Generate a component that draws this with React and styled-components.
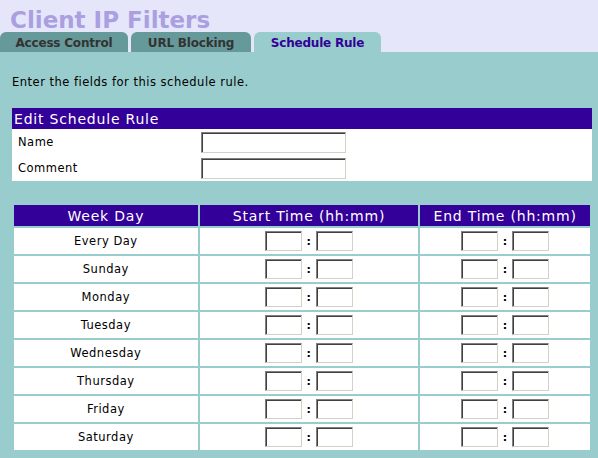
import React from 'react';
import styled, { createGlobalStyle } from 'styled-components';

const GlobalStyle = createGlobalStyle`
  html, body {
    margin: 0;
    padding: 0;
    background: #99cccc;
    font-family: "DejaVu Sans", Verdana, sans-serif;
  }
`;

const Header = styled.div`
  background: #e6e6fb;
  padding: 8px 0 0 0;
`;

const Title = styled.h1`
  margin: 0 0 0 10px;
  font-size: 23px;
  line-height: 24px;
  font-weight: bold;
  color: #aa9fe0;
`;

const Tabs = styled.div`
  display: flex;
  gap: 3px;
`;

const Tab = styled.div`
  width: ${(p) => p.$w}px;
  height: 20px;
  box-sizing: border-box;
  border-radius: 6px 6px 0 0;
  background: ${(p) => (p.$active ? '#99cccc' : '#669999')};
  color: ${(p) => (p.$active ? '#330099' : '#333333')};
  font-size: 12px;
  letter-spacing: -0.2px;
  font-weight: bold;
  line-height: 22px;
  text-align: center;
  overflow: hidden;
`;

const Content = styled.div`
  padding: 23px 6px 8px 12px;
`;

const Intro = styled.p`
  margin: 0 0 19px 0;
  font-size: 11.5px;
  letter-spacing: 0.5px;
  line-height: 14px;
  color: #000;
`;

const EditBox = styled.table`
  width: 580px;
  border-collapse: collapse;
  background: #fff;
  margin-bottom: 22px;
`;

const BoxHead = styled.th`
  background: #330099;
  color: #fff;
  font-size: 14px;
  letter-spacing: 0.8px;
  font-weight: normal;
  text-align: left;
  height: 21px;
  padding: 0 2px;
`;

const Label = styled.td`
  width: 182px;
  padding: 0 0 0 6px;
  height: 26px;
  font-size: 11.5px;
  letter-spacing: 0.5px;
`;

const Field = styled.input`
  box-sizing: border-box;
  width: ${(p) => p.$w || 145}px;
  height: ${(p) => p.$h || 21}px;
  margin: 0;
  padding: 0 2px;
  background: #fff;
  border: 1px solid;
  border-color: #808080 #d4d0c8 #d4d0c8 #808080;
  box-shadow: inset 1px 1px 0 #404040;
  outline: none;
  vertical-align: middle;
`;

const Schedule = styled.table`
  width: 580px;
  border-spacing: 2px;
`;

const HeadCell = styled.th`
  background: #330099;
  color: #fff;
  font-size: 14px;
  letter-spacing: 0.8px;
  font-weight: normal;
  height: 21px;
  padding: 0;
  width: ${(p) => p.$w}px;
`;

const Cell = styled.td`
  background: #fff;
  height: 26px;
  padding: 0;
  text-align: center;
  font-size: 11.5px;
  letter-spacing: 0.5px;
`;

const TimePair = styled.div`
  display: flex;
  justify-content: center;
  align-items: center;
`;

const Colon = styled.span`
  width: 14px;
  text-align: center;
  font-size: 11px;
  font-weight: bold;
`;

const days = ['Every Day', 'Sunday', 'Monday', 'Tuesday', 'Wednesday', 'Thursday', 'Friday', 'Saturday'];

const Time = () => (
  <TimePair>
    <Field $w={37} $h={20} />
    <Colon>:</Colon>
    <Field $w={37} $h={20} />
  </TimePair>
);

export default function App() {
  return (
    <>
      <GlobalStyle />
      <Header>
        <Title>Client IP Filters</Title>
        <Tabs>
          <Tab $w={128}>Access Control</Tab>
          <Tab $w={120}>URL Blocking</Tab>
          <Tab $w={127} $active>Schedule Rule</Tab>
        </Tabs>
      </Header>
      <Content>
        <Intro>Enter the fields for this schedule rule.</Intro>
        <EditBox>
          <thead>
            <tr>
              <BoxHead colSpan={2}>Edit Schedule Rule</BoxHead>
            </tr>
          </thead>
          <tbody>
            <tr>
              <Label>Name</Label>
              <td><Field /></td>
            </tr>
            <tr>
              <Label>Comment</Label>
              <td><Field /></td>
            </tr>
          </tbody>
        </EditBox>
        <Schedule>
          <thead>
            <tr>
              <HeadCell $w={184}>Week Day</HeadCell>
              <HeadCell $w={219}>Start Time (hh:mm)</HeadCell>
              <HeadCell $w={170}>End Time (hh:mm)</HeadCell>
            </tr>
          </thead>
          <tbody>
            {days.map((d) => (
              <tr key={d}>
                <Cell>{d}</Cell>
                <Cell><Time /></Cell>
                <Cell><Time /></Cell>
              </tr>
            ))}
          </tbody>
        </Schedule>
      </Content>
    </>
  );
}
